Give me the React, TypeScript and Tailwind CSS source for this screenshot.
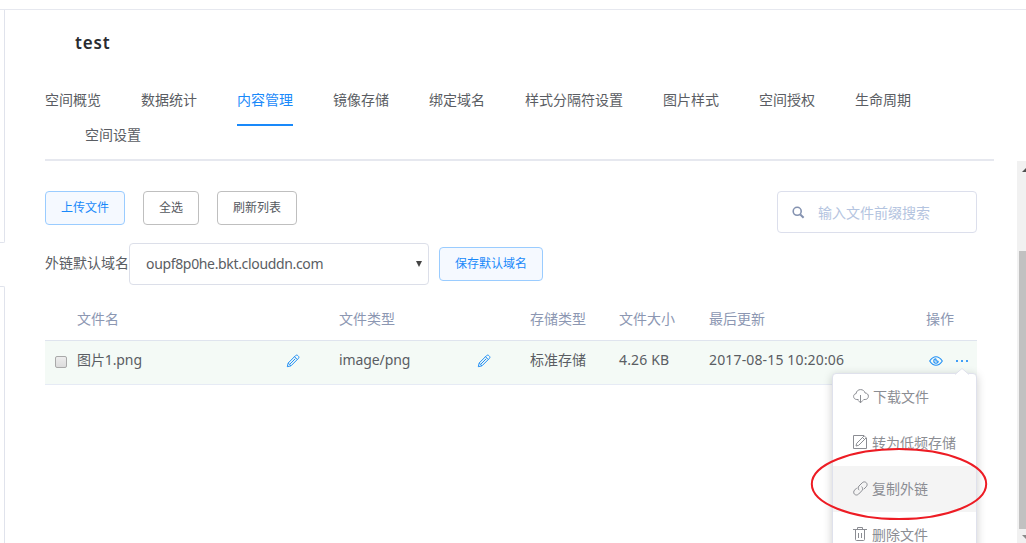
import clsx from "clsx";

const tabs = ["空间概览", "数据统计", "内容管理", "镜像存储", "绑定域名", "样式分隔符设置", "图片样式", "空间授权", "生命周期", "空间设置"];

const PencilIcon = () => (
  <svg width="14" height="14" viewBox="0 0 14 14" fill="none" stroke="#1f8ef5" strokeWidth="1">
    <path d="M1.300 12.700l.9-3.700 7.400-7.400c.7-.7 1.600-.6 2.200 0l.6.6c.6.6.7 1.500 0 2.200L5 11.800zM8.500 2.700l2.800 2.800M9.300 4.700L4 10M2.200 9L5 11.800" />
  </svg>
);

const EyeIcon = () => (
  <svg width="14" height="10" viewBox="0 0 14 10" fill="none" stroke="#1f8ef5" strokeWidth="1.100">
    <path d="M.7 5C2.500 2.200 4.600.7 7 .7S11.500 2.200 13.300 5C11.500 7.800 9.400 9.300 7 9.300S2.500 7.800.7 5z" />
    <path d="M7 2.800a2.200 2.200 0 1 0 2.200 2.200M7 2.800v2.200h2.200" />
  </svg>
);

const CloudIcon = () => (
  <svg width="16" height="15" viewBox="0 0 16 15" fill="none" stroke="#8b8d93" strokeWidth="1">
    <path d="M5.500 10.500H3.800C2 10.500.6 9.200.6 7.500c0-1.600 1-2.700 2.500-2.900C3.300 2.200 5.200.6 7.600.6c2.200 0 3.900 1.300 4.500 3.400 2 .1 3.300 1.500 3.300 3.200 0 1.900-1.400 3.300-3.200 3.300h-1.700M7.500 6v7.800M5 11.300l2.500 2.500 2.500-2.500" />
  </svg>
);

const EditIcon = () => (
  <svg width="14" height="14" viewBox="0 0 14 14" fill="none" stroke="#8b8d93" strokeWidth="1">
    <path d="M11 .5H.5v13h13V3M3 11l.7-2.700 7.500-7.500 2 2-7.500 7.500zM9.500 2.500l2 2" />
  </svg>
);

const LinkIcon = () => (
  <svg width="15" height="15" viewBox="0 0 15 15" fill="none" stroke="#8b8d93" strokeWidth="1">
    <path d="M6.200 9.200C4.900 8 4.800 6.200 6 5l3.200-3.200c1.200-1.200 3-1.200 4.100-.1s1.100 2.900-.1 4.100L10.700 8.300" />
    <path d="M8.600 5.600c1.300 1.200 1.400 3 .2 4.200l-3.200 3.300c-1.200 1.200-3 1.200-4.100.1s-1.100-2.900.1-4.100l2.300-2.300" />
  </svg>
);

const TrashIcon = () => (
  <svg width="14" height="14" viewBox="0 0 14 14" fill="none" stroke="#8b8d93" strokeWidth="1">
    <path d="M0 2.500h14M4.500 2.500v-2h5v2M2.500 2.500v10c0 .6.400 1 1 1h7c.6 0 1-.4 1-1v-10M5.500 6v5M8.500 6v5" />
  </svg>
);

const menu = [
  { label: "下载文件", icon: <CloudIcon /> },
  { label: "转为低频存储", icon: <EditIcon /> },
  { label: "复制外链", icon: <LinkIcon />, active: true },
  { label: "删除文件", icon: <TrashIcon /> },
];

const Button = ({ children, primary }: { children: React.ReactNode; primary?: boolean }) => (
  <button
    className={clsx(
      "h-[34px] px-[15px] rounded border text-xs leading-none whitespace-nowrap",
      primary ? "border-[#9accff] bg-[#f5f9ff] text-[#1989fa]" : "border-[#bfbfbf] bg-white text-[#55585e]"
    )}
  >
    {children}
  </button>
);

const Menu = () => (
  <div className="absolute left-[832px] top-[373px] w-[145px] rounded border border-[#dfe1ec] bg-white shadow-[0_2px_10px_rgba(0,0,0,0.2)] text-[#8b8d93]">
    <svg className="absolute right-[7px] -top-[6px]" width="14" height="7" viewBox="0 0 14 7">
      <path d="M0 6.500L7 .5l7 6" fill="#fff" stroke="#dfe1ec" />
      <path d="M1 6.500h12" stroke="#fff" />
    </svg>
    {menu.map(item => (
      <div key={item.label} className={clsx("h-[46px] flex items-center pl-5", item.active && "bg-[#f4f4f4]")}>
        <span className={clsx("shrink-0 -mt-0.5", item.label === "下载文件" ? "w-5" : "w-[19px]")}>{item.icon}</span>
        <span>{item.label}</span>
      </div>
    ))}
  </div>
);

const Scrollbar = () => (
  <div className="w-[9px] h-[382px] mt-[151px] bg-[#f1f1f1] overflow-hidden flex flex-col">
    <svg className="shrink-0" width="9" height="90" viewBox="0 0 9 90">
      <path d="M5 11l4-4v4z" fill="#505050" />
    </svg>
    <div className="ml-0.5 h-[278px] shrink-0 bg-[#c1c1c1]" />
    <svg className="shrink-0" width="9" height="14" viewBox="0 0 9 14">
      <path d="M5 6h4v4z" fill="#8a8a8a" />
    </svg>
  </div>
);

export default function App() {
  return (
    <div className="relative w-[1026px] h-[543px] overflow-hidden bg-white pt-[9px] text-sm leading-5 text-[#5a5d63] font-['Noto_Sans','Noto_Sans_CJK_SC',sans-serif]">
      <div className="flex h-[534px] border-t border-[#e6e8ef]">
        <aside className="w-[5px] shrink-0 flex flex-col gap-[43px]">
          <div className="h-[233px] border-r border-b border-[#e0e3ec] rounded-br-xs" />
          <div className="flex-1 border-r border-t border-[#e0e3ec] rounded-tr-xs" />
        </aside>

        <main className="w-[949px] ml-10 mr-[23px] shrink-0">
          <h1 className="ml-[30px] mt-[23px] h-5 text-[17px] leading-5 font-semibold tracking-[0.8px] text-[#2a2c30]">test</h1>

          <nav className="mt-[30px] h-[78px] flex flex-wrap content-start border-b-2 border-[#e6e8ef]">
            {tabs.map((tab, i) => (
              <a
                key={tab}
                className={clsx(
                  "pt-[7px] whitespace-nowrap",
                  i === 9 ? "ml-10" : "mr-10",
                  i === 2 ? "h-[43px] -mb-2 border-b-2 border-[#1989fa] text-[#1989fa]" : "h-[35px]"
                )}
              >
                {tab}
              </a>
            ))}
          </nav>

          <section className="w-[932px] pt-[30px]">
            <div className="flex items-start">
              <Button primary>上传文件</Button>
              <div className="ml-[18px]"><Button>全选</Button></div>
              <div className="ml-[18px]"><Button>刷新列表</Button></div>
              <div className="ml-auto w-[200px] h-[42px] border border-[#dcdfec] rounded flex items-center pl-[14px] text-[#b4c4e0]">
                <svg className="mr-[13px]" width="13" height="13" viewBox="0 0 13 13" fill="none" stroke="#8492b0" strokeWidth="1.600">
                  <circle cx="5.200" cy="5.300" r="4" />
                  <path d="M8.300 8.500l3.300 3.300" strokeWidth="2" />
                </svg>
                <span className="pt-0.5">输入文件前缀搜索</span>
              </div>
            </div>

            <div className="mt-[10px] flex items-center">
              <span className="w-[84px] -mt-0.5">外链默认域名</span>
              <div className="w-[300px] h-[42px] border border-[#dcdfe9] rounded flex items-center justify-between pl-4 pr-1.5">
                <span className="tracking-[-0.34px]">oupf8p0he.bkt.clouddn.com</span>
                <svg width="6" height="6" viewBox="0 0 6 6"><path d="M0 0h6L3 6z" fill="#444" /></svg>
              </div>
              <div className="ml-[10px] h-[34px] flex"><Button primary>保存默认域名</Button></div>
            </div>

            <div className="h-[56px] flex items-center pt-3 border-b border-[#dfe4ee] text-[#8c97b2]">
              <span className="w-[262px] ml-8">文件名</span>
              <span className="w-[191px]">文件类型</span>
              <span className="w-[89px]">存储类型</span>
              <span className="w-[90px]">文件大小</span>
              <span className="w-[217px]">最后更新</span>
              <span>操作</span>
            </div>
            <div className="h-11 flex items-center pb-[5px] bg-[#f4faf6] border-b border-[#e6ebf5] whitespace-nowrap">
              <span className="mx-[10px] mt-1 size-3 border border-[#a9a9a9] rounded-[2px] bg-linear-to-b from-[#ededed] to-[#dcdcdc]" />
              <span className="w-[209px] tracking-[-0.1px]">图片1.png</span>
              <span className="w-[53px] pt-px"><PencilIcon /></span>
              <span className="w-[138px] tracking-[-0.1px]">image/png</span>
              <span className="w-[53px] pt-px"><PencilIcon /></span>
              <span className="w-[89px]">标准存储</span>
              <span className="w-[90px] tracking-[0.15px]">4.26 KB</span>
              <span className="w-[220px] tracking-[0.15px]">2017-08-15 10:20:06</span>
              <span className="pt-0.5"><EyeIcon /></span>
              <svg className="ml-3 mt-0.5" width="14" height="2" viewBox="0 0 14 2" fill="#419ef7">
                <path d="M1 0h2v2H1zM6 0h2v2H6zM11 0h2v2h-2z" />
              </svg>
            </div>
          </section>
        </main>

        <Scrollbar />
      </div>

      <Menu />

      {/* highlight ring */}
      <svg className="absolute left-[810px] top-[447px]" width="178" height="74" viewBox="0 0 178 74">
        <ellipse cx="89" cy="37" rx="87.200" ry="35" fill="none" stroke="#ed1c24" strokeWidth="2" />
      </svg>
    </div>
  );
}
